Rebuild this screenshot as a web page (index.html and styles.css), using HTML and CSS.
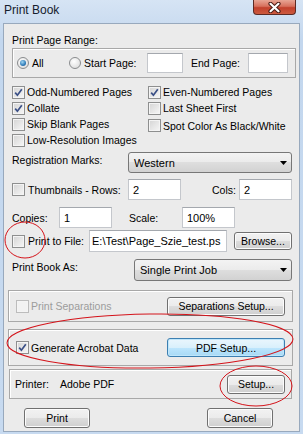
FILE: index.html
```html
<!DOCTYPE html>
<html lang="en">
<head>
    <meta charset="UTF-8">
    <meta name="viewport" content="width=device-width, initial-scale=1.0">
    <title>Print Book</title>
    <link rel="stylesheet" href="styles.css">
</head>
<body>
    <div class="window">
        <div class="titlebar">
            <span class="title">Print Book</span>
            <span class="close-btn">
                <svg width="15" height="11" viewBox="0 0 15 11">
                    <path d="M3.5 1.8 L11.5 9.2 M11.5 1.8 L3.5 9.2" stroke="#4b1d17" stroke-width="4.2" stroke-linecap="round"/>
                    <path d="M3.5 1.8 L11.5 9.2 M11.5 1.8 L3.5 9.2" stroke="#fff" stroke-width="2.2" stroke-linecap="round"/>
                </svg>
            </span>
        </div>

        <div class="client">
            <div class="range-label">Print Page Range:</div>
            <div class="range-box">
                <span class="radio checked"></span><span class="range-all">All</span>
                <span class="radio"></span><span class="range-start">Start Page:</span>
                <span class="field start-field"></span>
                <span class="range-end">End Page:</span>
                <span class="field end-field"></span>
            </div>

            <div class="options">
                <div class="check-row"><span class="checkbox checked"><svg width="11" height="11" viewBox="0 0 11 11"><path d="M2.2 5.6 L4.4 8.2 L8.8 2.2" fill="none" stroke="#3a4f86" stroke-width="1.7"/></svg></span>Odd-Numbered Pages</div>
                <div class="check-row"><span class="checkbox checked"><svg width="11" height="11" viewBox="0 0 11 11"><path d="M2.2 5.6 L4.4 8.2 L8.8 2.2" fill="none" stroke="#3a4f86" stroke-width="1.7"/></svg></span>Even-Numbered Pages</div>
                <div class="check-row"><span class="checkbox checked"><svg width="11" height="11" viewBox="0 0 11 11"><path d="M2.2 5.6 L4.4 8.2 L8.8 2.2" fill="none" stroke="#3a4f86" stroke-width="1.7"/></svg></span>Collate</div>
                <div class="check-row"><span class="checkbox"></span>Last Sheet First</div>
                <div class="check-row"><span class="checkbox"></span>Skip Blank Pages</div>
                <div class="check-row lower"><span class="checkbox"></span>Spot Color As Black/White</div>
                <div class="check-row"><span class="checkbox"></span>Low-Resolution Images</div>
            </div>

            <div class="row reg-row">
                <span class="reg-label">Registration Marks:</span>
                <div class="combo reg-combo">Western<svg class="arrow" width="7" height="4" viewBox="0 0 7 4"><path d="M0 0 H7 L3.5 4 Z" fill="#000"/></svg></div>
            </div>

            <div class="row thumb-row">
                <span class="checkbox"></span>
                <span class="thumb-label">Thumbnails - Rows:</span>
                <span class="field small-field">2</span>
                <span class="cols-label">Cols:</span>
                <span class="field small-field">2</span>
            </div>

            <div class="row copies-row">
                <span class="copies-label">Copies:</span>
                <span class="field small-field">1</span>
                <span class="scale-label">Scale:</span>
                <span class="field small-field">100%</span>
            </div>

            <div class="row file-row">
                <span class="checkbox"></span>
                <span class="file-label">Print to File:</span>
                <span class="field file-field">E:\Test\Page_Szie_test.ps</span>
                <span class="button browse-btn">Browse...</span>
            </div>

            <div class="row as-row">
                <span class="as-label">Print Book As:</span>
                <div class="combo as-combo">Single Print Job<svg class="arrow" width="7" height="4" viewBox="0 0 7 4"><path d="M0 0 H7 L3.5 4 Z" fill="#000"/></svg></div>
            </div>

            <div class="group sep-group">
                <span class="checkbox disabled"></span>
                <span class="group-text disabled-text">Print Separations</span>
                <span class="button group-btn">Separations Setup...</span>
            </div>

            <div class="group gen-group">
                <span class="checkbox checked"><svg width="11" height="11" viewBox="0 0 11 11"><path d="M2.2 5.6 L4.4 8.2 L8.8 2.2" fill="none" stroke="#3a4f86" stroke-width="1.7"/></svg></span>
                <span class="group-text">Generate Acrobat Data</span>
                <span class="button group-btn default-btn">PDF Setup...</span>
            </div>

            <div class="group printer-group">
                <span class="printer-label">Printer:</span>
                <span class="group-text">Adobe PDF</span>
                <span class="button setup-btn">Setup...</span>
            </div>

            <div class="row action-row">
                <span class="button action-btn print-btn">Print</span>
                <span class="button action-btn cancel-btn">Cancel</span>
            </div>
        </div>

        <!-- red annotation marks drawn over the dialog -->
        <svg class="marks" width="303" height="434" viewBox="0 0 303 434">
            <ellipse cx="25" cy="240" rx="20" ry="18" fill="none" stroke="#d4141b" stroke-width="1"/>
            <ellipse cx="150" cy="341" rx="143" ry="27" transform="rotate(-0.8 150 341)" fill="none" stroke="#d4141b" stroke-width="1"/>
            <ellipse cx="256" cy="386" rx="36" ry="20" fill="none" stroke="#d4141b" stroke-width="1"/>
        </svg>
    </div>
</body>
</html>
```

FILE: styles.css
```css
* {
    box-sizing: border-box;
}

body {
    margin: 0;
    font-family: "Liberation Sans", Arial, sans-serif;
    font-size: 10.5px;
    color: #000;
}

.window {
    position: relative;
    width: 303px;
    height: 434px;
    padding: 0 3px 2px 3px;
    display: flex;
    flex-direction: column;
    background: linear-gradient(#d6e4f4, #c3d7ee 40px, #c7daf0);
}

.titlebar {
    height: 23px;
    display: flex;
    align-items: flex-start;
}

.title {
    margin: 3px 0 0 1px;
    font-size: 12px;
    line-height: 14px;
    color: #15202e;
}

.close-btn {
    margin-left: auto;
    margin-right: 4px;
    width: 43px;
    height: 15px;
    display: flex;
    justify-content: center;
    align-items: center;
    border: 1px solid #5c2a24;
    border-top: none;
    border-radius: 0 0 4px 4px;
    background: linear-gradient(#e8a594, #d7705d 45%, #c2402c 55%, #cc5a3f);
}

.client {
    flex: 1;
    border: 1px solid #98a9bd;
    background: #ebebeb;
}

.row {
    display: flex;
    align-items: center;
    margin-left: 8px;
}

/* page range */
.range-label {
    margin: 9px 0 0 8px;
    line-height: 14px;
}

.range-box {
    margin: 1px 0 0 8px;
    width: 284px;
    height: 30px;
    display: flex;
    align-items: center;
    padding-left: 4px;
    border: 1px solid #a8a8a8;
    box-shadow: inset 1px 1px 0 #fff;
}

.radio {
    width: 12px;
    height: 12px;
    border-radius: 50%;
    border: 1px solid #8a8c8e;
    background: radial-gradient(circle at 40% 35%, #fff, #e2e2e2 70%, #cfcfcf);
    position: relative;
}

.radio.checked::after {
    content: "";
    position: absolute;
    left: 2px;
    top: 2px;
    width: 6px;
    height: 6px;
    border-radius: 50%;
    background: radial-gradient(circle at 40% 35%, #9fd6f3, #2f7bb8 60%, #1b4f86);
}

.range-all {
    margin-left: 3px;
    width: 37px;
}

.range-start {
    margin-left: 3px;
    width: 63px;
}

.range-end {
    margin-left: 8px;
    width: 57px;
}

.field {
    height: 20px;
    display: flex;
    align-items: center;
    padding-left: 4px;
    background: #fff;
    border: 1px solid #c4c7cc;
    border-top-color: #a4a8ae;
    white-space: nowrap;
    overflow: hidden;
}

.start-field {
    width: 36px;
}

.end-field {
    width: 40px;
}

/* checkbox options */
.options {
    margin: 6px 0 0 8px;
    display: grid;
    grid-template-columns: 136px auto;
    grid-auto-rows: 16px;
}

.check-row {
    display: flex;
    align-items: center;
    white-space: nowrap;
}

.check-row.lower {
    padding-top: 3px;
}

.check-row .checkbox {
    margin-right: 2px;
}

.checkbox {
    width: 13px;
    height: 13px;
    flex: none;
    display: flex;
    justify-content: center;
    align-items: center;
    border: 1px solid #8e8f8f;
    background: linear-gradient(135deg, #d4d4d4, #f7f7f7);
    box-shadow: inset 0 0 0 1px #f4f4f4;
}

.checkbox.disabled {
    border-color: #bcbcbc;
    background: #f2f2f2;
}

/* combos and labelled rows */
.reg-row {
    margin-top: 4px;
    height: 21px;
}

.reg-label {
    width: 116px;
    align-self: flex-start;
    margin-top: 2px;
}

.combo {
    height: 21px;
    display: flex;
    align-items: center;
    padding-left: 5px;
    border: 1px solid #777;
    border-radius: 3px;
    background: linear-gradient(#f3f3f3, #ebebeb 50%, #dedede 50%, #d2d2d2);
    font-size: 11px;
}

.combo .arrow {
    margin-left: auto;
    margin-right: 4px;
}

.reg-combo {
    width: 164px;
}

.thumb-row {
    margin-top: 6px;
    height: 21px;
}

.thumb-label {
    margin-left: 3px;
    width: 100px;
}

.small-field {
    width: 53px;
    height: 21px;
    font-size: 11px;
}

.cols-label {
    margin-left: 31px;
    width: 27px;
}

.copies-row {
    margin-top: 7px;
    height: 21px;
}

.copies-label {
    width: 47px;
}

.scale-label {
    margin-left: 17px;
    width: 53px;
}

.file-row {
    margin-top: 2px;
    height: 22px;
}

.file-label {
    margin-left: 3px;
    width: 61px;
}

.file-field {
    width: 138px;
    height: 22px;
    font-size: 11px;
    padding-left: 2px;
}

.button {
    display: flex;
    justify-content: center;
    align-items: center;
    height: 19px;
    border: 1px solid #707070;
    border-radius: 3px;
    background: linear-gradient(#f2f2f2, #ebebeb 50%, #dddddd 50%, #cfcfcf);
    box-shadow: inset 0 0 0 1px #fcfcfc;
    white-space: nowrap;
}

.browse-btn {
    margin-left: 7px;
    width: 58px;
    height: 18px;
}

.as-row {
    margin-top: 7px;
    height: 22px;
}

.as-label {
    width: 122px;
    align-self: flex-start;
    margin-top: 2px;
}

.as-combo {
    width: 158px;
    height: 22px;
}

/* framed groups */
.group {
    display: flex;
    align-items: center;
    margin-left: 4px;
    width: 285px;
    padding-left: 7px;
    border: 1px solid #a8a8a8;
    box-shadow: inset 1px 1px 0 #fff;
}

.group-text {
    margin-left: 2px;
    flex: 1;
}

.disabled-text {
    color: #9c9c9c;
}

.group-btn {
    width: 118px;
    margin-right: 7px;
}

.sep-group {
    margin-top: 9px;
    height: 32px;
}

.gen-group {
    margin-top: 7px;
    height: 37px;
}

.default-btn {
    border-color: #3c7fb1;
    background: linear-gradient(#eaf6fd, #d9f0fc 50%, #bee6fd 50%, #a7d9f5);
    box-shadow: inset 0 0 0 1px #bfe6fb;
}

.printer-group {
    margin-top: 3px;
    margin-left: 5px;
    width: 283px;
    height: 30px;
    padding-left: 5px;
}

.printer-label {
    width: 45px;
}

.printer-group .group-text {
    margin-left: 0;
}

.setup-btn {
    width: 58px;
    margin-right: 6px;
}

.action-row {
    margin-top: 9px;
    margin-left: 0;
    height: 20px;
}

.action-btn {
    width: 66px;
    height: 20px;
}

.print-btn {
    margin-left: 20px;
}

.cancel-btn {
    margin-left: 117px;
}

.marks {
    position: absolute;
    left: 0;
    top: 0;
    pointer-events: none;
}
```
